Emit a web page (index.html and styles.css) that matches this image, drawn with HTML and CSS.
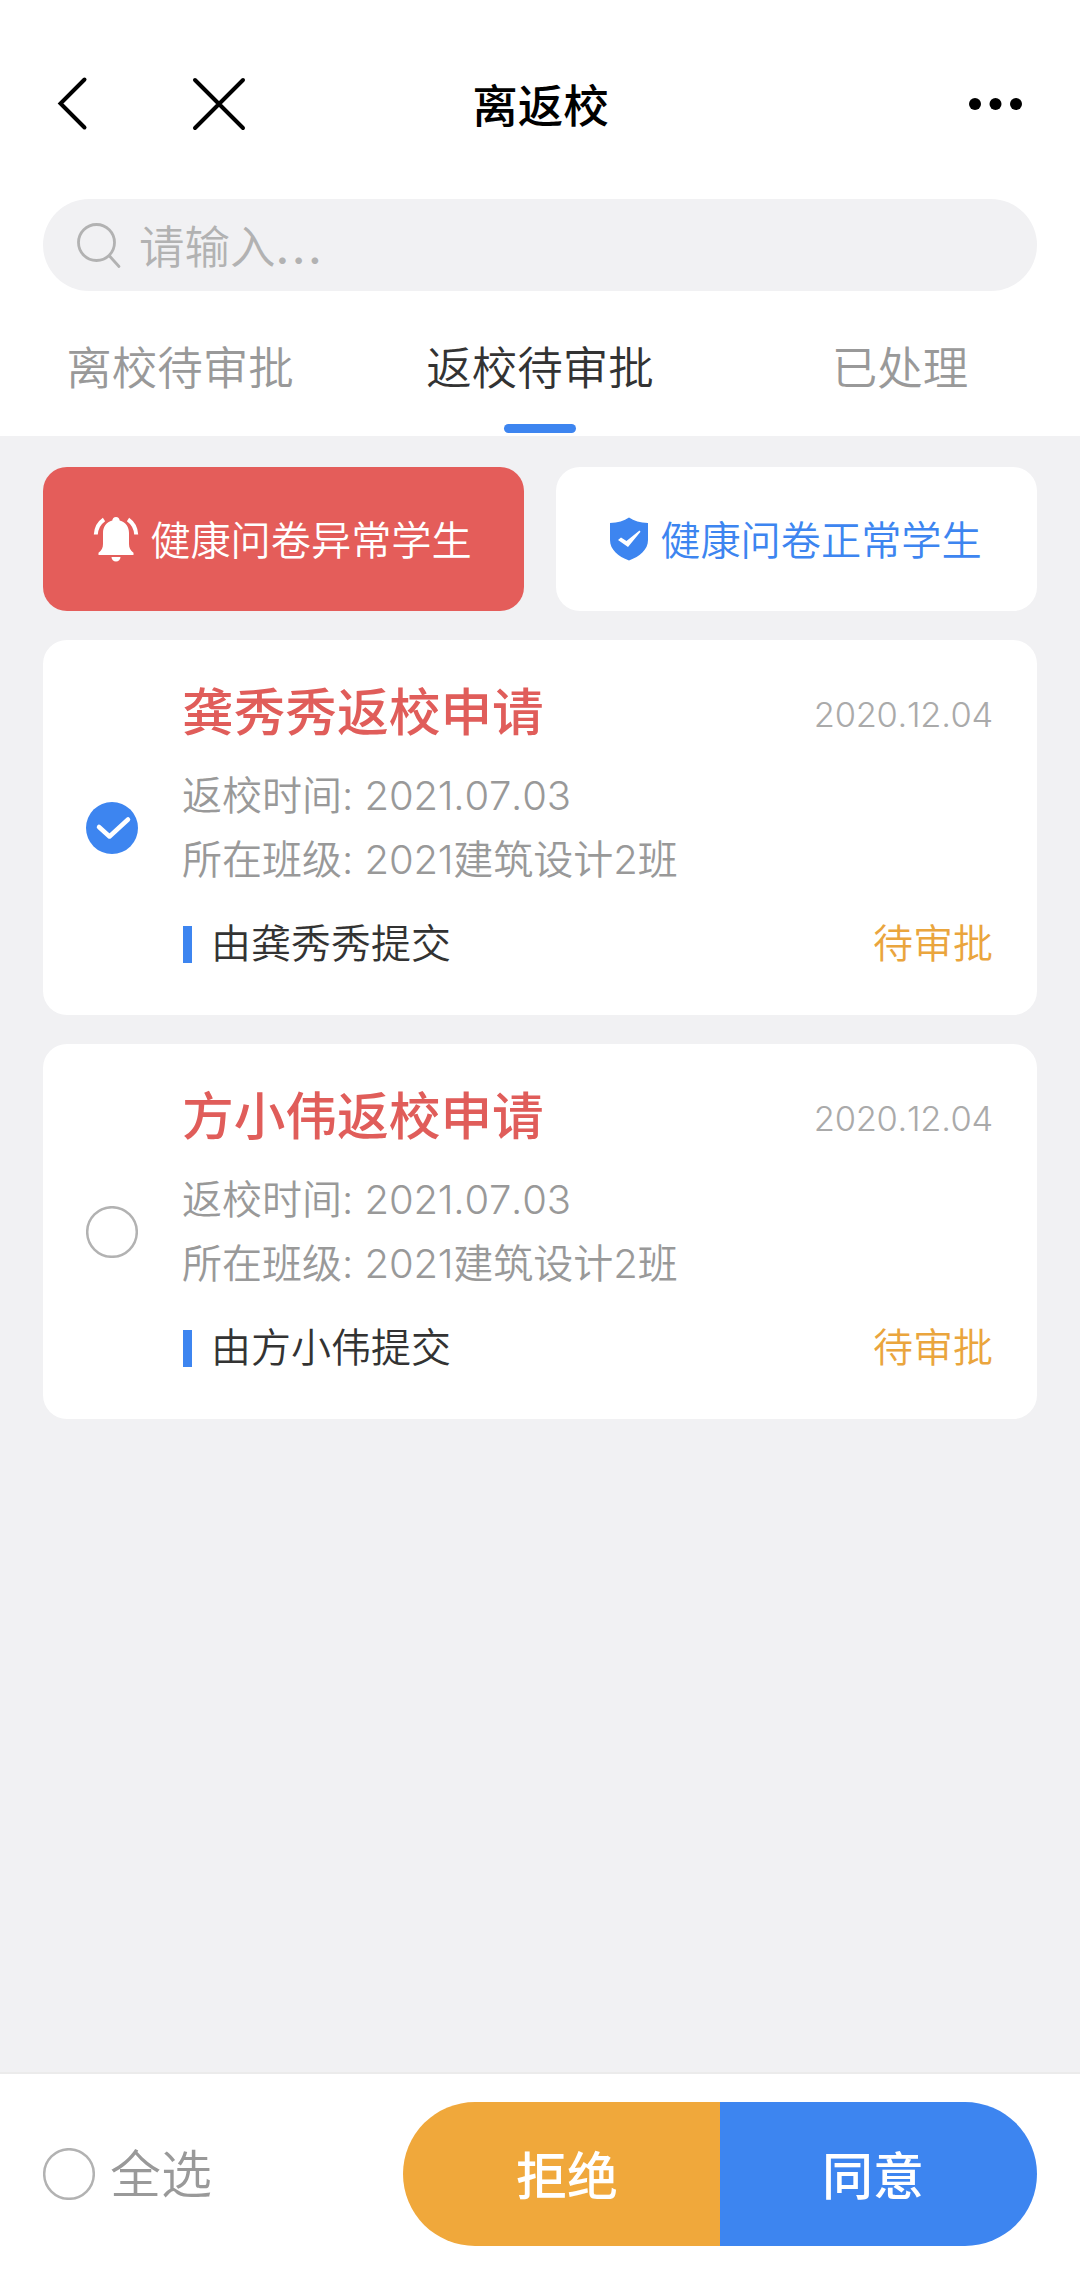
FILE: index.html
```html
<!DOCTYPE html>
<html lang="zh-CN">
<head>
<meta charset="utf-8">
<title>离返校</title>
<link rel="stylesheet" href="styles.css">
</head>
<body>
<div class="app">
  <header class="navbar">
    <div class="nav-left">
      <svg class="icon-back" width="34" height="56" viewBox="0 0 34 56"><path d="M29.500 3.500 5.500 27.500l24 24" /></svg>
      <svg class="icon-close" width="56" height="56" viewBox="0 0 56 56"><path d="M4 4l48 48M52 4L4 52" /></svg>
    </div>
    <h1 class="nav-title">离返校</h1>
    <div class="nav-right">
      <svg class="icon-more" width="56" height="14" viewBox="0 0 56 14"><circle cx="7" cy="7" r="6"/><circle cx="27.500" cy="7" r="6"/><circle cx="48" cy="7" r="6"/></svg>
    </div>
  </header>

  <div class="search">
    <svg class="icon-search" width="46" height="48" viewBox="0 0 46 48"><circle cx="20.500" cy="21.500" r="18"/><path d="M33.500 35 43 45.500"/></svg>
    <span class="search-hint">请输入<span class="dots">...</span></span>
  </div>

  <nav class="tabs">
    <a class="tab">离校待审批</a>
    <a class="tab active">返校待审批</a>
    <a class="tab">已处理</a>
  </nav>

  <main class="content">
    <div class="filters">
      <button class="filter danger">
        <svg class="icon-bell" width="46" height="46" viewBox="0 0 46 46">
          <path class="fill" d="M23 1c2.200 0 3.600 1.500 3.700 3.600C32.700 6.300 36 11 36 17v11c0 4 1.500 6.500 4.500 8.800V39h-35v-2.200C8.500 34.500 10 32 10 28V17c0-6 3.300-10.700 9.300-12.400C19.400 2.500 20.800 1 23 1z"/>
          <path class="fill" d="M18.500 41h9c0 2.500-2 4.500-4.500 4.500s-4.500-2-4.500-4.500z"/>
          <path class="wave" d="M11 3.500C6 7 3.200 12 2.800 18.500M35 3.500C40 7 42.800 12 43.200 18.500"/>
        </svg>
        <span>健康问卷异常学生</span>
      </button>
      <button class="filter normal">
        <svg class="icon-shield" width="40" height="46" viewBox="0 0 40 46">
          <path class="plate" d="M20 1.500C25 5 31 6.700 39 7v17c0 9.500-8 16.500-19 20.500C9 40.500 1 33.500 1 24V7c8-.3 14-2 19-5.500z"/>
          <path class="tick" d="M9 24l3-2.500 5.500 3.500L30.500 14.500l1 1.200L19 31z"/>
        </svg>
        <span>健康问卷正常学生</span>
      </button>
    </div>

    <article class="card">
      <svg class="radio" width="52" height="52" viewBox="0 0 52 52"><circle class="on" cx="26" cy="26" r="26"/><path class="check" d="M13 25 23.500 34.500 42 17.500"/></svg>
      <div class="card-body">
        <div class="card-head"><h2>龚秀秀返校申请</h2><time>2020.12.04</time></div>
        <p class="info">返校时间: <span class="num">2021.07.03</span></p>
        <p class="info">所在班级: <span class="num">2021</span>建筑设计<span class="num">2</span>班</p>
        <div class="card-foot"><span class="by">由龚秀秀提交</span><span class="status">待审批</span></div>
      </div>
    </article>

    <article class="card">
      <svg class="radio" width="52" height="52" viewBox="0 0 52 52"><circle class="off" cx="26" cy="26" r="24.800"/></svg>
      <div class="card-body">
        <div class="card-head"><h2>方小伟返校申请</h2><time>2020.12.04</time></div>
        <p class="info">返校时间: <span class="num">2021.07.03</span></p>
        <p class="info">所在班级: <span class="num">2021</span>建筑设计<span class="num">2</span>班</p>
        <div class="card-foot"><span class="by">由方小伟提交</span><span class="status">待审批</span></div>
      </div>
    </article>
  </main>

  <footer class="actions">
    <label class="select-all">
      <svg width="52" height="52" viewBox="0 0 52 52"><circle class="off" cx="26" cy="26" r="24.800"/></svg>
      <span>全选</span>
    </label>
    <div class="buttons">
      <button class="reject">拒绝</button>
      <button class="approve">同意</button>
    </div>
  </footer>
</div>
</body>
</html>
```
FILE: styles.css
```css
* { box-sizing: border-box; margin: 0; padding: 0; }
body {
  background: #fff;
  font-family: Inter, "Noto Sans CJK SC", sans-serif;
  font-weight: 350;
  color: #333;
}
button { border: 0; font: inherit; }
svg { display: block; flex: none; fill: none; }

.app { width: 1080px; height: 2275px; display: flex; flex-direction: column; overflow: hidden; }

.navbar {
  height: 199px;
  padding: 9px 56px 0 55px;
  display: grid;
  grid-template-columns: 1fr auto 1fr;
  align-items: center;
}
.nav-left { display: flex; align-items: center; gap: 102px; }
.nav-right { display: flex; justify-content: flex-end; }
.nav-title { font-size: 45.500px; line-height: 60px; padding: 5px 0 0 2px; font-weight: 500; color: #000; }
.icon-back, .icon-close { stroke: #000; stroke-width: 4; stroke-linecap: round; }
.icon-more { fill: #000; }

.search {
  height: 92px;
  margin: 0 43px;
  padding-left: 33px;
  border-radius: 46px;
  background: #f1f1f3;
  display: flex;
  align-items: center;
  gap: 17px;
}
.icon-search { stroke: #b2b2b2; stroke-width: 2.800; stroke-linecap: round; }
.search-hint { font-size: 45.500px; line-height: 60px; padding-top: 5px; color: #b2b2b2; }
.dots { font-weight: 500; letter-spacing: 2.500px; }

.tabs { height: 145px; display: grid; grid-template-columns: repeat(3, 1fr); }
.tab {
  display: flex;
  flex-direction: column;
  align-items: center;
  justify-content: space-between;
  padding: 48px 0 3px;
  font-size: 45.500px;
  line-height: 60px;
  color: #999;
}
.tab.active { color: #333; }
.tab.active::after { content: ""; width: 72px; height: 9px; border-radius: 4.500px; background: #3d85f0; }

.content {
  flex: 1;
  padding: 31px 43px 0;
  background: #f1f1f3;
  border-bottom: 2px solid #ebebeb;
  display: flex;
  flex-direction: column;
  gap: 29px;
}
.filters { display: grid; grid-template-columns: 1fr 1fr; gap: 32px; }
.filter {
  height: 144px;
  padding-right: 2px;
  border-radius: 24px;
  display: flex;
  align-items: center;
  justify-content: center;
  gap: 11px;
  font-size: 40.200px;
  line-height: 60px;
}
.filter span { padding-top: 3px; }
.danger { background: #e45d5a; color: #fff; }
.normal { background: #fff; color: #3d85f0; }
.icon-bell .fill { fill: #fff; }
.icon-bell .wave { stroke: #fff; stroke-width: 4; }
.icon-shield .plate { fill: #3d85f0; }
.icon-shield .tick { fill: #fff; }

.card {
  height: 375px;
  padding: 0 44px 0 43px;
  border-radius: 24px;
  background: #fff;
  display: flex;
  align-items: center;
  gap: 44px;
}
.on { fill: #3d85f0; }
.check { stroke: #fff; stroke-width: 4.500; stroke-linecap: round; stroke-linejoin: round; }
.off { stroke: #b2b2b2; stroke-width: 2.500; }
.card-body { flex: 1; padding-bottom: 2px; }
.card-head { display: flex; justify-content: space-between; align-items: center; height: 68px; margin-bottom: 17px; }
.card-head h2 { font-size: 51.700px; line-height: 68px; padding-bottom: 2px; font-weight: 500; color: #e05d5a; }
.card-head time { font-size: 34.500px; font-weight: 300; font-kerning: none; letter-spacing: -0.300px; color: #aaa; padding-top: 3px; }
.info { font-size: 40px; line-height: 64px; color: #999; white-space: nowrap; }
.num { font-weight: 300; font-kerning: none; letter-spacing: -0.200px; }
.card-foot { display: flex; justify-content: space-between; align-items: center; height: 60px; margin-top: 22px; font-size: 40px; line-height: 60px; }
.by { display: flex; align-items: center; gap: 19px; }
.by::before { content: ""; width: 9px; height: 37px; margin-left: 1px; background: #3d85f0; }
.status { color: #eaa53d; }

.actions {
  height: 201px;
  padding: 0 43px 2px;
  display: flex;
  align-items: center;
  justify-content: space-between;
  background: #fff;
}
.select-all { display: flex; align-items: center; gap: 15px; font-size: 51px; line-height: 70px; color: #999; }
.select-all span { padding-top: 2px; }
.buttons { width: 634px; height: 144px; border-radius: 72px; overflow: hidden; display: grid; grid-template-columns: 1fr 1fr; }
.buttons button { padding-top: 7px; font-size: 51px; font-weight: 500; line-height: 70px; color: #fff; }
.buttons .reject { background: #f0a83b; padding-left: 11px; }
.buttons .approve { background: #3d85f0; padding-right: 11px; }
```
